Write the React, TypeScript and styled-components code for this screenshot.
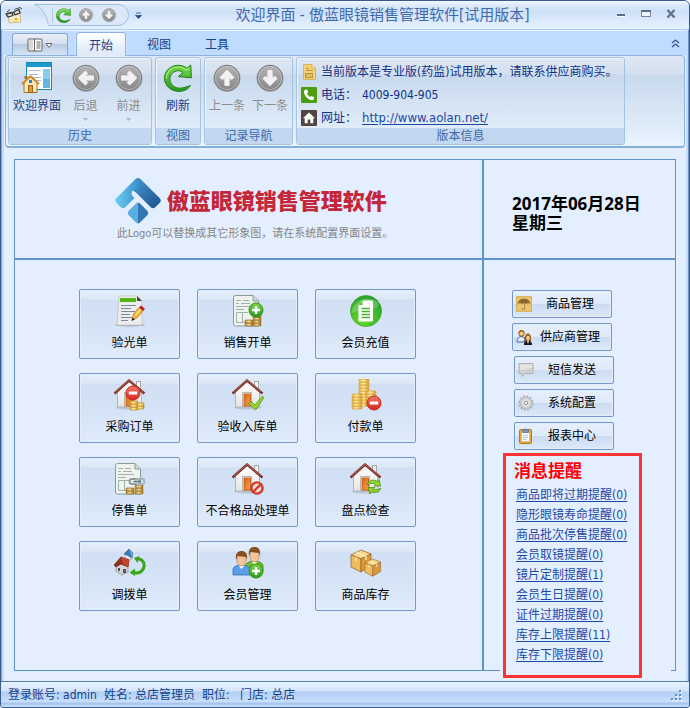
import React from "react";
import styled, { createGlobalStyle, css } from "styled-components";

const UI_FONT = '"DejaVu Sans Condensed", "Noto Sans CJK SC", sans-serif';
const BOLD_FONT = '"Noto Sans", "Noto Sans CJK SC", sans-serif';
const NAVY = "#15428b";
const LINE = "#5f92d0";
const PAPER = "#e3efff";

const GlobalStyle = createGlobalStyle`
  * { box-sizing: border-box; }
  body { margin: 0; background: #fff; font-family: ${UI_FONT}; font-size: 12px; line-height: 16px; }
  button { font: inherit; margin: 0; padding: 0; border: 0; background: none; cursor: pointer; }
  svg { display: block; flex: none; }
  h1, h2, p, ul { margin: 0; padding: 0; list-style: none; }
`;

/* ---------- window frame ---------- */

const Window = styled.div`
  min-height: 100vh;
  display: flex;
  flex-direction: column;
  border: 1px solid #3a5a8c;
  border-radius: 6px 6px 3px 3px;
  padding: 0 3px;
  overflow: hidden;
  background: linear-gradient(90deg, #85a9dc 0 1px, #c3daf9 1px 3px, ${PAPER} 3px calc(100% - 3px), #c3daf9 calc(100% - 3px) calc(100% - 1px), #6f94cb calc(100% - 1px));
`;

const TitleBar = styled.header`
  height: 29px;
  margin: 0 -3px;
  padding: 0 10px 0 4px;
  display: flex;
  align-items: center;
  background: linear-gradient(#f3f8ff 0, #e2edfc 3px, #d3e3f8 8px, #d0e1f8 12px, #e2efff 24px, #e6f1ff 100%);
  border-bottom: 1px solid #a9cbf7;
`;

const QuickAccess = styled.div`
  position: relative;
  display: flex;
  align-items: center;
  width: 98px;
  height: 22px;
  margin: 0 0 1px 9px;
  padding-left: 23px;
  gap: 7px;
`;

const QuickShape = styled.svg`
  position: absolute;
  inset: 0;
`;

const IconButton = styled.button`
  position: relative;
  display: grid;
  place-items: center;
  width: 16px;
  height: 16px;
`;

const Caption = styled.h1`
  flex: 1;
  padding-left: 6px;
  text-align: center;
  font-size: 15px;
  line-height: 20px;
  font-weight: 400;
  color: #3f6bad;
  white-space: nowrap;
`;

const WindowButtons = styled.div`
  display: flex;
  gap: 9px;
  margin-bottom: 2px;
`;

/* ---------- ribbon ---------- */

const TabStrip = styled.nav`
  height: 25px;
  margin: 0 -1px;
  padding: 0 4px 0 9px;
  display: flex;
  align-items: flex-end;
  gap: 8px;
  background: #bfdbff;
  border-top: 1px solid #f0f6ff;
`;

const MenuButton = styled.button`
  display: flex;
  align-items: center;
  justify-content: center;
  gap: 2px;
  width: 56px;
  height: 22px;
  border: 1px solid #8ba4c8;
  border-bottom: 0;
  border-radius: 3px 3px 0 0;
  background: linear-gradient(#e8eff8 0, #d5e0ee 45%, #b9cbe2 50%, #d4e4f6 100%);
`;

const Tab = styled.button<{ $active?: boolean }>`
  width: 50px;
  height: 23px;
  padding-top: 2px;
  color: ${NAVY};
  border: 1px solid transparent;
  border-bottom: 0;
  ${(p) =>
    p.$active &&
    css`
      position: relative;
      height: 24px;
      margin-bottom: -1px;
      border-color: #8db2e3;
      border-radius: 4px 4px 0 0;
      background: linear-gradient(#fff, #e6f0fb 60%, #dfeaf7);
      box-shadow: 0 0 2px #fff;
    `}
`;

const Spacer = styled.span`
  flex: 1;
`;

const CollapseButton = styled(IconButton)`
  align-self: center;
`;

const Ribbon = styled.section`
  display: flex;
  gap: 3px;
  margin: 0 1px;
  padding: 1px 2px;
  border: 1px solid #8db2e3;
  border-bottom: 2px solid #87b0d8;
  border-radius: 4px;
  background: linear-gradient(#dfe9f5 0, #d4e0ef 18px, #c8d9ed 19px, #e0ecf9 80%, #e8f4ff 100%);
`;

const Group = styled.div<{ $width: number }>`
  flex: 0 1 ${(p) => p.$width}px;
  display: flex;
  flex-direction: column;
  border: 1px solid #a4c3e0;
  border-radius: 3px;
  box-shadow: inset 1px 1px 0 #eef5fd;
  overflow: hidden;
`;

const GroupBody = styled.div`
  display: flex;
  justify-content: center;
  height: 70px;
`;

const GroupLabel = styled.div`
  height: 16px;
  line-height: 17px;
  text-align: center;
  color: #3e6aaa;
  background: #c2d8f1;
`;

const RibbonButton = styled.button<{ $wide?: boolean }>`
  display: flex;
  flex-direction: column;
  align-items: center;
  width: ${(p) => (p.$wide ? 54 : 43)}px;
  padding-top: 4px;
  gap: 4px;
  color: ${NAVY};
  white-space: nowrap;
  &:disabled {
    color: #8d8d8d;
  }
`;

const InfoList = styled.ul`
  flex: 1;
  padding: 2px 4px 0;
`;

const InfoRow = styled.li`
  display: flex;
  align-items: center;
  gap: 4px;
  height: 23px;
  color: #0f3288;
  white-space: nowrap;
`;

const InfoKey = styled.span`
  width: 37px;
`;

const Link = styled.a`
  color: #1c48a8;
  text-decoration: underline;
  text-underline-offset: 2px;
`;

const SiteLink = styled(Link)`
  font-size: 13px;
`;

/* ---------- welcome board ---------- */

const Board = styled.main`
  flex: 1;
  display: grid;
  grid-template-columns: minmax(0, 1fr) 191px;
  grid-template-rows: 100px 1fr;
  margin: 11px 10px 10px;
  border: 1px solid ${LINE};
`;

const Cell = styled.section<{ $left?: boolean; $top?: boolean }>`
  ${(p) => p.$left && `border-right: 2px solid ${LINE};`}
  ${(p) => p.$top && `border-bottom: 2px solid ${LINE};`}
`;

const BrandCell = styled(Cell)`
  display: flex;
  justify-content: center;
  padding: 18px 0 0 11px;
`;

const Brand = styled.div`
  display: flex;
  flex-direction: column;
  gap: 2px;
`;

const BrandRow = styled.div`
  display: flex;
  align-items: center;
  gap: 6px;
`;

const BrandName = styled.h2`
  padding-bottom: 4px;
  font-family: "Noto Sans CJK SC", sans-serif;
  font-size: 22px;
  line-height: 26px;
  font-weight: 900;
  color: #c4263a;
  white-space: nowrap;
`;

const BrandNote = styled.p`
  padding-left: 2px;
  font-size: 11px;
  color: #858585;
  white-space: nowrap;
`;

const Today = styled(Cell)`
  padding: 34px 0 0 28px;
  font-family: ${BOLD_FONT};
  font-size: 17px;
  line-height: 19px;
  font-weight: 700;
  color: #000;
  white-space: nowrap;
`;

const Launcher = styled(Cell)`
  display: grid;
  grid-template-columns: repeat(3, 101px);
  grid-auto-rows: 70px;
  justify-content: center;
  align-content: start;
  gap: 14px 17px;
  padding: 29px 2px 0 0;
`;

const tile = css`
  border: 1px solid #7397c8;
  border-radius: 2px;
  box-shadow: inset 0 0 0 1px #e4eefb;
  color: #000;
  white-space: nowrap;
`;

const Tile = styled.button`
  ${tile}
  display: flex;
  flex-direction: column;
  align-items: center;
  padding-top: 5px;
  gap: 8px;
  background: linear-gradient(#e4edfa 0, #dce8f8 9px, #d0dff3 10px, #d6e4f7 60%, #e0ecfb 100%);
`;

const Side = styled(Cell)`
  display: flex;
  flex-direction: column;
  padding-top: 30px;
`;

const ToolGroup = styled.div<{ $indent: number }>`
  display: grid;
  grid-template-columns: 100px;
  grid-auto-rows: 28px;
  gap: 5px;
  margin: 0 0 5px ${(p) => p.$indent}px;
`;

const ToolButton = styled.button`
  ${tile}
  display: flex;
  align-items: center;
  padding: 0 3px;
  background: linear-gradient(#e6effb 0, #dfeafa 48%, #cbdcf2 52%, #dbe8f9 100%);
`;

const ToolText = styled.span`
  flex: 1;
  text-align: center;
`;

const NoticeArea = styled.div`
  flex: 1;
  margin: -2px 4px -10px 16px;
  padding: 0 0 2px 3px;
  background: ${PAPER};
  z-index: 1;
`;

const NoticeBox = styled.div`
  width: 139px;
  height: 100%;
  padding: 5px 0 0 8px;
  border: 3px solid #fa3232;
`;

const NoticeTitle = styled.h2`
  font-family: ${BOLD_FONT};
  font-size: 17px;
  line-height: 20px;
  font-weight: 700;
  color: #f00;
  margin-bottom: 4px;
`;

const Notice = styled.li`
  height: 20px;
  line-height: 20px;
  padding-left: 2px;
  white-space: nowrap;
`;

/* ---------- status bar ---------- */

const StatusBar = styled.footer`
  display: flex;
  align-items: center;
  gap: 7px;
  height: 26px;
  margin: 0 -3px;
  padding: 0 7px 0 7px;
  border-top: 1px solid #567db1;
  background: linear-gradient(#e8f2ff 0, #d3e4fa 9px, #b2cef3 10px, #c9dffa 20px, #a3c2ec 21px, #c8defa 100%);
  color: ${NAVY};
  white-space: pre;
`;

/* ---------- icons ---------- */

const HiddenSvg = styled.svg`
  position: absolute;
`;

const Svg = ({ size = 32, box = 32, children }: { size?: number; box?: number; children: React.ReactNode }) => (
  <svg width={size} height={size} viewBox={`0 0 ${box} ${box}`} aria-hidden="true">
    {children}
  </svg>
);

const Defs = () => (
  <HiddenSvg width="0" height="0" aria-hidden="true">
    <defs>
      <linearGradient id="gray" x1="0" y1="0" x2="0" y2="1">
        <stop offset="0" stopColor="#b5b5b5" />
        <stop offset="1" stopColor="#858585" />
      </linearGradient>
      <linearGradient id="green" x1="0" y1="0" x2="0" y2="1">
        <stop offset="0" stopColor="#7ad84a" />
        <stop offset="1" stopColor="#239a1c" />
      </linearGradient>
      <linearGradient id="gold" x1="0" y1="0" x2="1" y2="0">
        <stop offset="0" stopColor="#e9b440" />
        <stop offset=".45" stopColor="#fff0a0" />
        <stop offset="1" stopColor="#dc9c28" />
      </linearGradient>
      <linearGradient id="bronze" x1="0" y1="0" x2="1" y2="0">
        <stop offset="0" stopColor="#b98a3c" />
        <stop offset=".5" stopColor="#f5dc94" />
        <stop offset="1" stopColor="#9c6c24" />
      </linearGradient>
      <linearGradient id="red" x1="0" y1="0" x2="0" y2="1">
        <stop offset="0" stopColor="#f47a66" />
        <stop offset="1" stopColor="#d5281e" />
      </linearGradient>
      <linearGradient id="door" x1="0" y1="0" x2="1" y2="1">
        <stop offset="0" stopColor="#d9661c" />
        <stop offset="1" stopColor="#f5a04c" />
      </linearGradient>
      <linearGradient id="wall" x1="0" y1="0" x2="0" y2="1">
        <stop offset="0" stopColor="#ffffff" />
        <stop offset="1" stopColor="#e4e4e6" />
      </linearGradient>
      <linearGradient id="logoA" x1="0" y1="0" x2="1" y2="0">
        <stop offset="0" stopColor="#6fcdf2" />
        <stop offset="1" stopColor="#3a92cc" />
      </linearGradient>
      <linearGradient id="logoB" x1="0" y1="0" x2="1" y2="1">
        <stop offset="0" stopColor="#4399d0" />
        <stop offset="1" stopColor="#1f4f90" />
      </linearGradient>
      <radialGradient id="ball" cx=".4" cy=".75" r=".8">
        <stop offset="0" stopColor="#6ede28" />
        <stop offset="1" stopColor="#1f9f2c" />
      </radialGradient>
    </defs>
  </HiddenSvg>
);

const Arrow = ({ turn, size = 32 }: { turn: number; size?: number }) => (
  <Svg size={size}>
    <circle cx="16" cy="16.5" r="13.5" fill="#6b6b6b" opacity=".35" />
    <circle cx="16" cy="16" r="12.8" fill="url(#gray)" stroke="#7a7a7a" />
    <circle cx="16" cy="16" r="11.6" fill="none" stroke="#c4c4c4" strokeOpacity=".7" />
    <path
      d="M16 8.2 23 15.4 20.6 17.8 18.1 15.4V23.4H13.9V15.4L11.4 17.8 9 15.4Z"
      transform={`rotate(${turn} 16 16)`}
      fill="#f2f2f2"
      stroke="#f2f2f2"
      strokeWidth="1"
      strokeLinejoin="round"
    />
  </Svg>
);

const Refresh = ({ size = 32 }: { size?: number }) => (
  <Svg size={size}>
    <path
      d="M28.6 23.5C26 27.5 21.4 29.6 16.7 29.4 8.6 29.2 2.5 23.5 2.5 16.3 2.5 9 8.6 3.3 16 3.3 19.6 3.3 22.6 4.3 24.8 6.2L28.8 3 29.3 15.8 16.4 14.6 20.7 10.4C18.9 8.8 16.6 8.4 14.5 9 10 10.2 7.3 14 8 18.4 9 24.2 15 27.3 21 25.8 24.2 25 26.7 24.1 28.6 23.5Z"
      fill="url(#green)"
      stroke="#1d7f19"
      strokeLinejoin="round"
    />
    <path d="M4.3 17C4.2 10.3 9.5 5 16 5 19.5 5 22.3 6 24.5 8.3L27.4 6" fill="none" stroke="#b6f292" strokeWidth="1.2" opacity=".8" />
  </Svg>
);

const WelcomeIcon = () => (
  <Svg>
    <rect x="5.5" y=".5" width="25" height="27" fill="#fff" stroke="#1688b4" />
    <rect x="6" y="1" width="24" height="4" fill="#1c9ccb" />
    <rect x="22" y="7" width="7" height="19" fill="#5fb6e4" />
    <rect x="22" y="7" width="7" height="10" fill="#8accee" />
    <path d="M8 8.5H20M8 12.5H17M8 15.5H20M10 18.5H20" stroke="#a9b8cc" />
    <path d="M3 20.5V30.5H16V20.5L9.5 14Z" fill="#fbe7b8" stroke="#a97323" />
    <path d="M1 22 9.5 14.2 18 22" fill="none" stroke="#c98a2c" strokeWidth="2" strokeLinejoin="round" />
    <path d="M4.5 17V15H6.5" fill="none" stroke="#a97323" strokeWidth="2" />
    <rect x="8" y="18" width="3" height="3" fill="#2c7fd0" />
    <rect x="7.5" y="23.5" width="4" height="7" fill="#e29b33" stroke="#9c6718" />
  </Svg>
);

const AppIcon = () => (
  <Svg size={18} box={18}>
    <path d="M3 8 15 6 16 16 4 17Z" fill="#f4efd8" stroke="#c5b98c" />
    <path d="M5 14 15 12.5V15.5L5 16.5Z" fill="#f6e3a0" />
    <path d="M2 6 5 3.5M9.5 3.5 15 1.5 17 3" fill="none" stroke="#444" />
    <path d="M1 8 7 6.5 8 9.5 3 11Z" fill="#e4e4da" fillOpacity=".7" stroke="#333" strokeWidth="1.3" strokeLinejoin="round" />
    <path d="M8.5 6 14 3.5 15 7 10 8.8Z" fill="#e4e4da" fillOpacity=".7" stroke="#333" strokeWidth="1.3" strokeLinejoin="round" />
    <circle cx="11" cy="13" r="1.3" fill="#e8a31c" />
  </Svg>
);

const MenuIcon = () => (
  <svg width="26" height="14" viewBox="0 0 26 14" aria-hidden="true">
    <rect x="1" y="1" width="14" height="12" rx="1" fill="#fff" stroke="#5f5f5f" />
    <rect x="2" y="2" width="4" height="10" fill="#d9d9d9" />
    <path d="M7.5 1V13" stroke="#5f5f5f" />
    <path d="M9.5 4H13.5M9.5 6H13.5M9.5 8H13.5M9.5 10H13.5" stroke="#666" />
    <path d="M19 5.5H25L22 9.5Z" fill="#fff" stroke="#666" />
  </svg>
);

const SmallDown = () => (
  <svg width="5" height="3" viewBox="0 0 5 3" aria-hidden="true">
    <path d="M0 0H5L2.5 3Z" fill="#9db8d8" />
  </svg>
);

const Sheet = () => (
  <Svg size={16} box={16}>
    <path d="M2.5.5H11L14.5 4V15.5H2.5Z" fill="#f2d377" stroke="#d5b25c" />
    <path d="M11 .5V4H14.5" fill="#fff1bd" stroke="#d5b25c" />
    <path d="M5 4.5H8M5 6.5H12" stroke="#b79545" />
    <rect x="4.5" y="9.5" width="7" height="4" fill="#e3bf5e" stroke="#b79545" />
  </Svg>
);

const Phone = () => (
  <Svg size={16} box={16}>
    <rect width="16" height="16" rx="1" fill="#4d9d0e" />
    <path d="M4.3 2.8 6.2 2.5 7.2 5.3 6 6.5C6.7 8 7.8 9.2 9.3 10L10.6 8.9 13.3 10.2 12.9 12C12.5 13 11.4 13.4 10.2 13.1 6.5 12.1 3.6 9 3 5.2 2.9 4 3.4 3.1 4.3 2.8Z" fill="#fff" />
  </Svg>
);

const HomeBadge = () => (
  <Svg size={16} box={16}>
    <rect width="16" height="16" rx="1" fill="#544440" />
    <path d="M8 2.5 14 8.2H12.3V13.2H9.3V9.5H6.7V13.2H3.7V8.2H2Z" fill="#fff" />
  </Svg>
);

const Minus = ({ x, y, r = 7 }: { x: number; y: number; r?: number }) => (
  <g>
    <circle cx={x} cy={y} r={r} fill="url(#red)" stroke="#c1281f" />
    <rect x={x - r * 0.6} y={y - 1.5} width={r * 1.2} height="3" rx=".5" fill="#fff" />
  </g>
);

const Plus = ({ x, y }: { x: number; y: number }) => (
  <g>
    <circle cx={x} cy={y} r="7" fill="url(#green)" stroke="#398d12" />
    <path d={`M${x - 4} ${y}H${x + 4}M${x} ${y - 4}V${y + 4}`} stroke="#fff" strokeWidth="2.6" />
  </g>
);

const Coins = ({ x, y, n, w = 8, fill = "url(#bronze)", line = "#94671f" }: { x: number; y: number; n: number; w?: number; fill?: string; line?: string }) => (
  <g>
    {Array.from({ length: n }, (_, i) => (
      <rect key={i} x={x} y={y - i * 3} width={w} height="3" rx="1" fill={fill} stroke={line} strokeWidth=".7" />
    ))}
  </g>
);

const House = ({ children }: { children?: React.ReactNode }) => (
  <Svg>
    <ellipse cx="16" cy="28.5" rx="14" ry="2" fill="#8b98ab" opacity=".4" />
    <rect x="22.5" y="2.5" width="4" height="9" fill="#f5f5f5" stroke="#a6a6a6" />
    <path d="M3.5 12.5 15 2.5 27.5 12.5V28H3.5Z" fill="url(#wall)" stroke="#b5b5b8" />
    <path d="M.5 14.5 15 1.5 30.5 14.5" fill="none" stroke="#7c3128" strokeWidth="2.4" />
    <path d="M1.5 13.2 15 1.3 29 13" fill="none" stroke="#c67462" strokeWidth=".7" />
    <rect x="10.5" y="13.5" width="9" height="14" fill="#f7f0e8" stroke="#c0b4a8" />
    <rect x="12" y="15" width="6.5" height="12" fill="url(#door)" stroke="#ba5715" strokeWidth=".8" />
    {children}
  </Svg>
);

const Invoice = ({ children }: { children?: React.ReactNode }) => (
  <Svg>
    <path d="M3.5.5H21L26.5 6V31H3.5A2 2 0 0 1 1.5 29V2.5A2 2 0 0 1 3.5.5Z" fill="#eef3f0" stroke="#879c95" />
    <path d="M21 .5V6H26.5" fill="#cfdbd6" stroke="#879c95" />
    <path d="M4 5.5H9M11 5.5H17M4 8.5H7M9 8.5H18M4 11.5H20M4 14.5H12" stroke="#9fb1aa" />
    <path d="M4.5 17.5H16M4.5 17.5V27.5H18M10.5 17.5V27.5" fill="none" stroke="#9fb1aa" />
    {children}
  </Svg>
);

const OptometryIcon = () => (
  <Svg>
    <ellipse cx="16" cy="30" rx="15" ry="1.5" fill="#76808e" opacity=".6" />
    <path d="M5 1H23L28 6V30H3Z" fill="#ededed" stroke="#c9c9c9" />
    <path d="M23 1V6H28Z" fill="#474747" />
    <rect x="6" y="3" width="16" height="4" fill="#55b515" />
    <path d="M7 10.5H22M7 13.5H17M7 16.5H21M7 19.5H16M7 22.5H18M7 25.5H14" stroke="#7e8a98" />
    <path d="M18 25 19.5 19 25 12.5 29 16 23.5 22.5Z" fill="#f5b938" stroke="#bd7c18" strokeWidth=".8" />
    <path d="M21.3 20.5 26.8 14" stroke="#ffe394" strokeWidth="1.3" />
    <path d="M25 12.5 27 10.5 31 13.8 29 16Z" fill="#b92126" />
    <path d="M17.5 26 18.5 22.8 21 24.5Z" fill="#242424" />
  </Svg>
);

const SaleIcon = () => (
  <Invoice>
    <Coins x={13} y={28} n={2} />
    <Coins x={21} y={28} n={4} />
    <Plus x={24} y={15} />
  </Invoice>
);

const StopSaleIcon = () => (
  <Invoice>
    <Coins x={12} y={28} n={2} />
    <Coins x={21} y={28} n={3} />
    <rect x="15.5" y="16" width="10" height="5" rx="2.5" fill="none" stroke="#8b999e" strokeWidth="1.8" />
    <rect x="21.5" y="16" width="9" height="5" rx="2.5" fill="none" stroke="#a6b4b9" strokeWidth="1.8" />
    <path d="M19 18.5H27" stroke="#64757b" />
  </Invoice>
);

const RechargeIcon = () => (
  <Svg>
    <circle cx="16" cy="16" r="15.5" fill="url(#ball)" stroke="#38a21f" strokeWidth=".7" />
    <path d="M2 18C2 5 18-1 28 7 31 17 18 12 2 18Z" fill="#fff" opacity=".22" />
    <path d="M12.5 6H22.5V26H9V10Z" fill="#fff" stroke="#fff" strokeLinejoin="round" />
    <path d="M8.5 10 12.5 6V10Z" fill="#5ebd27" />
    <path d="M11.5 13.5H20M11.5 16.5H20M11.5 19.5H20M11.5 22.5H20" stroke="#4ab42a" strokeWidth="1.4" />
  </Svg>
);

const PurchaseIcon = () => (
  <House>
    <Coins x={16} y={28} n={3} fill="url(#gold)" line="#b28025" />
    <Coins x={23} y={27} n={2} w={7} fill="url(#gold)" line="#b28025" />
    <Minus x={19} y={14} />
  </House>
);

const ReceiveIcon = () => (
  <House>
    <path d="M16.5 24.5 19.5 22.5 23 26 30.5 17 32 18.5 23.5 31Z" fill="#96d62c" stroke="#568f12" strokeWidth=".8" strokeLinejoin="round" />
  </House>
);

const PaymentIcon = () => (
  <Svg>
    <Coins x={9} y={24} n={9} w={10} fill="url(#gold)" line="#d49a35" />
    <Coins x={16} y={24} n={5} w={10} fill="url(#gold)" line="#d49a35" />
    <Coins x={2} y={27} n={5} w={10} fill="url(#gold)" line="#d49a35" />
    <Minus x={24} y={24} />
  </Svg>
);

const RejectIcon = () => (
  <House>
    <circle cx="25" cy="25" r="5.6" fill="#f8ded9" fillOpacity=".75" stroke="#d23c2c" strokeWidth="2.4" />
    <path d="M21 29 29 21" stroke="#d23c2c" strokeWidth="2.4" />
  </House>
);

const StocktakeIcon = () => (
  <House>
    <path d="M17 21.5C19 17 24 15.8 27.5 18.8L29 16.5 30.5 23 24 23 25.5 21.4C23 19.7 20.5 20.5 17 21.5Z" fill="#92d52e" stroke="#4c8e14" strokeWidth=".8" />
    <path d="M31 25C29 29.5 25 30.5 21.5 28.5L20 31 18 24.5H25L23 26.5C25.5 27.5 28 26.5 31 25Z" fill="#92d52e" stroke="#4c8e14" strokeWidth=".8" />
  </House>
);

const TransferIcon = () => (
  <Svg>
    <path d="M11 7 17 9V13L11 11Z" fill="#e3e4e6" stroke="#999" strokeWidth=".6" />
    <path d="M10 7 15 2 19 6 18 11 13 8Z" fill="#3778b8" stroke="#21578d" strokeWidth=".6" />
    <path d="M15 2 19 6 18 11Z" fill="#68a9df" />
    <path d="M2 18 5 15 14 19V25L8 28 2 24Z" fill="#d5d6d8" stroke="#868686" strokeWidth=".7" />
    <path d="M0 18 7 10 15 13 14 20 7 17 2 20Z" fill="#97301e" stroke="#6c1d14" strokeWidth=".7" />
    <path d="M7 10 15 13 14 20 9 17Z" fill="#c4472c" />
    <path d="M4 21H6V24H4ZM9 22H12V26H9Z" fill="#555" />
    <path d="M22 12.5C27 10.5 31 15 30 19.5 29 25 24.5 27 19.5 25.5" fill="none" stroke="#38a51c" strokeWidth="3" />
    <path d="M25.5 9 20 11 23.5 16ZM21 21.5 15.5 25.5 21 29Z" fill="#38a51c" />
  </Svg>
);

const Person = ({ x, y, shirt, edge }: { x: number; y: number; shirt: string; edge: string }) => (
  <g transform={`translate(${x} ${y})`}>
    <path d="M0 24V19C0 16 3 14 8 14S17 16 17 19V24Z" fill={shirt} stroke={edge} strokeWidth=".8" />
    <path d="M5.5 14.5 8.5 18 11.5 14.5Z" fill="#fff" />
    <ellipse cx="8.5" cy="9" rx="4.7" ry="6" fill="#f2c699" stroke="#a77446" strokeWidth=".6" />
    <path d="M3 9C2 2 5 0 8.5 0S15 2 14 9L13 6C10 6 6 5 4.5 5Z" fill="#86501f" />
  </g>
);

const MembersIcon = () => (
  <Svg>
    <Person x={14} y={0} shirt="#74b836" edge="#487f1d" />
    <Person x={1} y={4} shirt="#5b9fe8" edge="#2f6ebb" />
    <Plus x={24} y={24} />
  </Svg>
);

const Box = ({ x, y, k }: { x: number; y: number; k: number }) => (
  <g transform={`translate(${x} ${y}) scale(${k})`}>
    <path d="M0 5 10 0 20 4 10 9Z" fill="#f9d78a" stroke="#9a6828" strokeWidth=".8" />
    <path d="M0 5 10 9V22L0 17Z" fill="#f1bd5c" stroke="#9a6828" strokeWidth=".8" />
    <path d="M20 4 10 9V22L20 16Z" fill="#d99a3e" stroke="#9a6828" strokeWidth=".8" />
    <path d="M5 2.5 15 6.5V10M5 7V11" fill="none" stroke="#fff0bd" strokeWidth="1.2" />
  </g>
);

const GoodsIcon = () => (
  <Svg>
    <Box x={1} y={3} k={1} />
    <Box x={15} y={12} k={0.78} />
  </Svg>
);

const Umbrella = () => (
  <Svg size={16} box={16}>
    <rect x=".5" y=".5" width="15" height="15" fill="#e8c36e" stroke="#dcb35c" />
    <path d="M1.5 8C2.5 4 5 2.8 8 2.8S13.5 4 14.5 8L12 7 10 8 8 7 6 8 4 7Z" fill="#8c6930" />
    <path d="M8.5 7V13.5H6.5V12" fill="none" stroke="#b08c48" />
  </Svg>
);

const SupplierIcon = () => (
  <Svg size={16} box={16}>
    <path d="M1 13C1 9 3 7.5 6 7.5L9 9 8 13Z" fill="#e5edff" stroke="#425f9c" />
    <circle cx="5.5" cy="4.5" r="2.7" fill="#f6c78f" stroke="#875213" />
    <path d="M2.5 4C2.5.5 8 0 8.5 3.5L6 2.5Z" fill="#a7670d" />
    <path d="M8 16C8 12.5 9.5 11.5 12 11.5S16 13 16 16Z" fill="#161616" />
    <path d="M9 12C8 7 10 4.5 12 4.5S15.5 7 15 12Z" fill="#9c5c0c" />
    <ellipse cx="12" cy="9" rx="1.7" ry="2.5" fill="#f8cf98" />
    <path d="M11 12H13L12 15Z" fill="#fff" />
  </Svg>
);

const Bubble = () => (
  <Svg size={16} box={16}>
    <path d="M1 1.5H15V11.5H7L4 14.5V11.5H1Z" fill="#cfd0d1" stroke="#b0b2b5" strokeLinejoin="round" />
    <path d="M2 2.5H14V6L2 8Z" fill="#e4e4e4" />
  </Svg>
);

const Gear = () => (
  <Svg size={16} box={16}>
    <circle cx="8" cy="8" r="6.7" fill="none" stroke="#b2b4b6" strokeWidth="2.2" strokeDasharray="2.2 1.31" />
    <circle cx="8" cy="8" r="5.8" fill="#cecfd1" stroke="#b2b4b6" strokeWidth=".7" />
    <circle cx="8" cy="8" r="3.3" fill="none" stroke="#ededed" />
    <circle cx="8" cy="8" r="1.7" fill="#f1f5fb" stroke="#9c9ea0" />
  </Svg>
);

const Clipboard = () => (
  <Svg size={16} box={16}>
    <rect x="1.5" y="1.5" width="12" height="14" rx="1" fill="#e9a726" stroke="#b97a12" />
    <rect x="3.5" y="3.5" width="8" height="10" fill="#f5f9ff" stroke="#a9c1e1" strokeWidth=".7" />
    <path d="M5 7.5H10M5 9.5H10M5 11.5H8" stroke="#b2c8e5" />
    <path d="M4.5 3.5V2.5H6L7.5.5 9 2.5H10.5V4.5H4.5Z" fill="#789cca" stroke="#4e75a9" strokeWidth=".8" />
  </Svg>
);

const Logo = () => (
  <Svg size={46} box={46}>
    <path d="M23 0Q21.5 0 20.5 1L1 20.5Q-.5 22.5 1 24.5L6 29.5Q8 31 10 29.5L19.5 20 17.5 18Q15.5 14.5 18 12.5 20 11.5 22 13L23 14Z" fill="url(#logoA)" />
    <path d="M23 0Q24.5 0 25.5 1L45 20.5Q46.5 22.5 45 24.5L40 29.5Q38 31 36 29.5L21 14.5 18 12.5Q20 11 23 12Z" fill="url(#logoB)" />
    <path d="M23 24.5Q22 24.5 21 25.5L13.5 33Q12 35 13.5 37L21 44.5Q22 45.5 23 45.5Z" fill="#5bafe0" />
    <path d="M23 24.5Q24 24.5 25 25.5L32.5 33Q34 35 32.5 37L25 44.5Q24 45.5 23 45.5Z" fill="#3277b4" />
  </Svg>
);

/* ---------- data ---------- */

const tiles: [string, React.FC][] = [
  ["验光单", OptometryIcon],
  ["销售开单", SaleIcon],
  ["会员充值", RechargeIcon],
  ["采购订单", PurchaseIcon],
  ["验收入库单", ReceiveIcon],
  ["付款单", PaymentIcon],
  ["停售单", StopSaleIcon],
  ["不合格品处理单", RejectIcon],
  ["盘点检查", StocktakeIcon],
  ["调拨单", TransferIcon],
  ["会员管理", MembersIcon],
  ["商品库存", GoodsIcon],
];

const toolGroups: { indent: number; items: [string, React.FC][] }[] = [
  { indent: 28, items: [["商品管理", Umbrella], ["供应商管理", SupplierIcon]] },
  { indent: 30, items: [["短信发送", Bubble], ["系统配置", Gear], ["报表中心", Clipboard]] },
];

const notices: [string, number][] = [
  ["商品即将过期提醒", 0],
  ["隐形眼镜寿命提醒", 0],
  ["商品批次停售提醒", 0],
  ["会员取镜提醒", 0],
  ["镜片定制提醒", 1],
  ["会员生日提醒", 0],
  ["证件过期提醒", 0],
  ["库存上限提醒", 11],
  ["库存下限提醒", 0],
];

const status = ["登录账号: admin", "姓名: 总店管理员", "职位: ", "门店: 总店"];

export default function App() {
  return (
    <Window>
      <GlobalStyle />
      <Defs />
      <TitleBar>
        <AppIcon />
        <QuickAccess>
          <QuickShape width="98" height="22" viewBox="0 0 98 22" aria-hidden="true">
            <path d="M2 .5C10 3 14 10 16.5 21.5H86A10.5 10.5 0 0 0 86 .5Z" fill="#dbe8f9" stroke="#a5bfe3" />
            <path d="M20.5 3V19" stroke="#b4cbe9" />
          </QuickShape>
          <IconButton aria-label="刷新"><Refresh size={17} /></IconButton>
          <IconButton aria-label="上一条"><Arrow turn={0} size={16} /></IconButton>
          <IconButton aria-label="下一条"><Arrow turn={180} size={16} /></IconButton>
        </QuickAccess>
        <IconButton aria-label="自定义快速访问工具栏">
          <svg width="7" height="7" viewBox="0 0 7 7" aria-hidden="true">
            <path d="M1 1H6M.5 3.5H6.5L3.5 6.5Z" fill="#24508f" stroke="#24508f" strokeWidth=".8" />
          </svg>
        </IconButton>
        <Caption>欢迎界面 - 傲蓝眼镜销售管理软件[试用版本]</Caption>
        <WindowButtons>
          <IconButton aria-label="最小化">
            <Svg size={10} box={10}><path d="M1 6H9" stroke="#5d6c84" strokeWidth="2" /><path d="M1 7.5H9" stroke="#fff" /></Svg>
          </IconButton>
          <IconButton aria-label="最大化">
            <Svg size={10} box={10}><rect x=".5" y="1.5" width="9" height="6" fill="#eef4fd" stroke="#7386a4" /><path d="M0 2H10" stroke="#5d6c84" strokeWidth="2" /></Svg>
          </IconButton>
          <IconButton aria-label="关闭">
            <Svg size={10} box={10}><path d="M1.5 1 8.5 8.5M8.5 1 1.5 8.5" stroke="#63728a" strokeWidth="2.4" /></Svg>
          </IconButton>
        </WindowButtons>
      </TitleBar>

      <TabStrip>
        <MenuButton aria-label="菜单"><MenuIcon /></MenuButton>
        <Tab $active>开始</Tab>
        <Tab>视图</Tab>
        <Tab>工具</Tab>
        <Spacer />
        <CollapseButton aria-label="收起功能区">
          <Svg size={9} box={9}><path d="M1 4 4.5 1 8 4M1 8 4.5 5 8 8" fill="none" stroke="#34588f" strokeWidth="1.3" /></Svg>
        </CollapseButton>
      </TabStrip>

      <Ribbon>
        <Group $width={144}>
          <GroupBody>
            <RibbonButton $wide><WelcomeIcon />欢迎界面</RibbonButton>
            <RibbonButton disabled><Arrow turn={-90} />后退<SmallDown /></RibbonButton>
            <RibbonButton disabled><Arrow turn={90} />前进<SmallDown /></RibbonButton>
          </GroupBody>
          <GroupLabel>历史</GroupLabel>
        </Group>
        <Group $width={46}>
          <GroupBody><RibbonButton><Refresh />刷新</RibbonButton></GroupBody>
          <GroupLabel>视图</GroupLabel>
        </Group>
        <Group $width={89}>
          <GroupBody>
            <RibbonButton disabled><Arrow turn={0} />上一条</RibbonButton>
            <RibbonButton disabled><Arrow turn={180} />下一条</RibbonButton>
          </GroupBody>
          <GroupLabel>记录导航</GroupLabel>
        </Group>
        <Group $width={329}>
          <GroupBody>
            <InfoList>
              <InfoRow><Sheet />当前版本是专业版(药监)试用版本，请联系供应商购买。</InfoRow>
              <InfoRow><Phone /><InfoKey>电话：</InfoKey>4009-904-905</InfoRow>
              <InfoRow><HomeBadge /><InfoKey>网址：</InfoKey><SiteLink href="http://www.aolan.net/">http://www.aolan.net/</SiteLink></InfoRow>
            </InfoList>
          </GroupBody>
          <GroupLabel>版本信息</GroupLabel>
        </Group>
      </Ribbon>

      <Board>
        <BrandCell $left $top>
          <Brand>
            <BrandRow>
              <Logo />
              <BrandName>傲蓝眼镜销售管理软件</BrandName>
            </BrandRow>
            <BrandNote>此Logo可以替换成其它形象图，请在系统配置界面设置。</BrandNote>
          </Brand>
        </BrandCell>
        <Today $top>
          <p>
            2017年06月28日
            <br />
            星期三
          </p>
        </Today>
        <Launcher $left>
          {tiles.map(([label, Icon]) => (
            <Tile key={label}><Icon />{label}</Tile>
          ))}
        </Launcher>
        <Side>
          {toolGroups.map((group) => (
            <ToolGroup key={group.indent} $indent={group.indent}>
              {group.items.map(([label, Icon]) => (
                <ToolButton key={label}><Icon /><ToolText>{label}</ToolText></ToolButton>
              ))}
            </ToolGroup>
          ))}
          <NoticeArea>
            <NoticeBox>
              <NoticeTitle>消息提醒</NoticeTitle>
              <ul>
                {notices.map(([label, count]) => (
                  <Notice key={label}><Link href="#">{`${label}(${count})`}</Link></Notice>
                ))}
              </ul>
            </NoticeBox>
          </NoticeArea>
        </Side>
      </Board>

      <StatusBar>
        {status.map((text) => (
          <span key={text}>{text}</span>
        ))}
        <Spacer />
        <Svg size={12} box={12}>
          <path d="M9 1h2v2H9zM9 5h2v2H9zM5 5h2v2H5zM9 9h2v2H9zM5 9h2v2H5zM1 9h2v2H1z" fill="#5f8cc8" />
          <path d="M10 3h2v1h-2zM10 7h2v1h-2zM6 7h2v1H6zM10 11h2v1h-2zM6 11h2v1H6zM2 11h2v1H2z" fill="#fff" />
        </Svg>
      </StatusBar>
    </Window>
  );
}
